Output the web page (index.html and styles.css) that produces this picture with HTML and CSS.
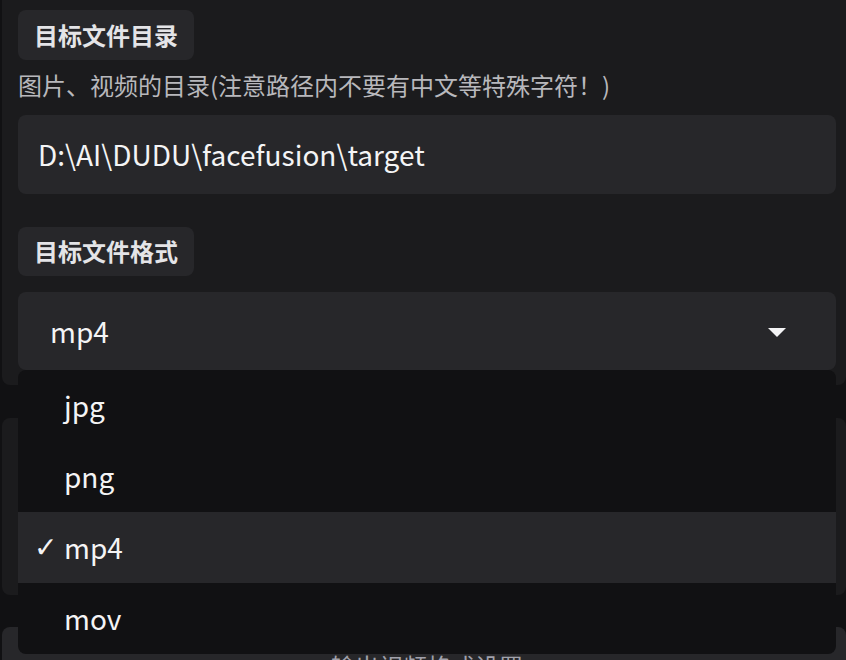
FILE: index.html
```html
<!DOCTYPE html>
<html lang="zh-CN">
<head>
<meta charset="utf-8">
<title>facefusion</title>
<link rel="stylesheet" href="styles.css">
</head>
<body>
<div class="page">
  <section class="panel">
    <span class="label">目标文件目录</span>
    <div class="info">图片、视频的目录(注意路径内不要有中文等特殊字符！)</div>
    <div class="input">D:\AI\DUDU\facefusion\target</div>
    <span class="label label-gap">目标文件格式</span>
    <div class="dropdown">
      <div class="select">
        <span class="select-value">mp4</span>
        <svg class="arrow" width="18" height="9" viewBox="0 0 18 9"><path d="M0 0H18L9 9Z" fill="#f4f4f5"/></svg>
      </div>
      <ul class="menu">
        <li class="option"><span class="check">✓</span>jpg</li>
        <li class="option"><span class="check">✓</span>png</li>
        <li class="option selected"><span class="check">✓</span>mp4</li>
        <li class="option"><span class="check">✓</span>mov</li>
      </ul>
    </div>
  </section>
  <section class="panel panel-second"></section>
  <section class="panel panel-third">
    <div class="third-text">输出视频格式设置</div>
  </section>
</div>
</body>
</html>
```
FILE: styles.css
```css
html, body {
  margin: 0;
  padding: 0;
  background: #111113;
  height: 100%;
  overflow: hidden;
}
body {
  font-family: "Noto Sans CJK SC", "Noto Sans", sans-serif;
  color: #f4f4f5;
}
.page {
  padding: 0 0 0 2px;
  display: flex;
  flex-direction: column;
}
.panel {
  background: #1b1b1d;
  border-radius: 0 0 8px 8px;
  padding: 10px 10px 15px 16px;
  display: flex;
  flex-direction: column;
  align-items: stretch;
}
.label {
  align-self: flex-start;
  background: #27272a;
  border-radius: 8px;
  padding: 8px 16px;
  font-size: 24px;
  line-height: 34px;
  font-weight: 700;
  color: #e4e4e7;
}
.label-gap {
  margin-top: 33px;
  padding-top: 7px;
  padding-bottom: 8px;
}
.info {
  margin-top: 8px;
  font-size: 24px;
  line-height: 34px;
  color: #b8b8bc;
}
.input {
  margin-top: 13px;
  height: 79px;
  line-height: 79px;
  background: #27272a;
  border-radius: 8px;
  padding: 0 20px;
  font-size: 28px;
  color: #f4f4f5;
}
.dropdown {
  position: relative;
  margin-top: 16px;
}
.select {
  height: 78px;
  background: #27272a;
  border-radius: 8px;
  display: flex;
  align-items: center;
  justify-content: space-between;
  padding: 0 50px 0 32px;
}
.select-value {
  font-size: 28px;
  line-height: 78px;
}
.arrow {
  display: block;
  margin-top: 2px;
}
.menu {
  position: absolute;
  top: 100%;
  left: 0;
  right: 0;
  margin: 0;
  padding: 0;
  list-style: none;
  background: #111113;
  border-radius: 8px;
  overflow: hidden;
  z-index: 5;
}
.option {
  height: 71px;
  line-height: 71px;
  font-size: 28px;
  padding-left: 16px;
  display: flex;
  align-items: center;
  color: #f4f4f5;
}
.option.selected {
  background: #27272a;
}
.check {
  width: 30px;
  padding-left: 0;
  box-sizing: border-box;
  font-size: 28px;
  font-weight: 700;
  font-family: "DejaVu Sans", sans-serif;
  visibility: hidden;
}
.option.selected .check {
  visibility: visible;
}
.panel-second {
  margin-top: 33px;
  border-radius: 8px;
  height: 177px;
  box-sizing: border-box;
}
.panel-third {
  margin-top: 32px;
  border-radius: 8px;
  background: #27272a;
  padding-top: 22px;
  height: 120px;
  box-sizing: border-box;
}
.third-text {
  text-align: center;
  font-size: 24px;
  line-height: 34px;
  color: #a1a1aa;
}
```
